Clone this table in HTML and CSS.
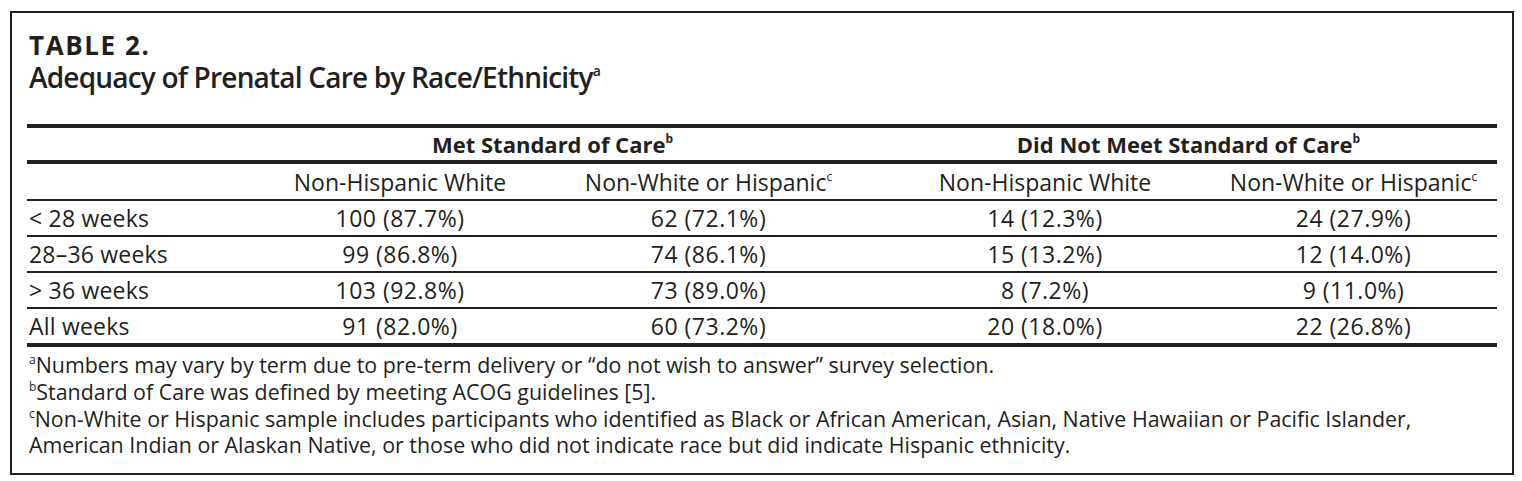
FILE: index.html
```html
<!DOCTYPE html>
<html lang="en">
<head>
<meta charset="utf-8">
<title>Table 2</title>
<link rel="stylesheet" href="styles.css">
</head>
<body>
<div class="card">
  <div class="label">TABLE 2.</div>
  <div class="title">Adequacy of Prenatal Care by Race/Ethnicity<sup>a</sup></div>
  <table class="data">
    <colgroup>
      <col class="c1"><col class="c2"><col class="c3"><col class="c4"><col class="c5">
    </colgroup>
    <thead>
      <tr class="group">
        <th></th>
        <th colspan="2">Met Standard of Care<sup>b</sup></th>
        <th colspan="2">Did Not Meet Standard of Care<sup>b</sup></th>
      </tr>
      <tr class="sub">
        <th></th>
        <th>Non-Hispanic White</th>
        <th class="shift">Non-White or Hispanic<sup>c</sup></th>
        <th>Non-Hispanic White</th>
        <th>Non-White or Hispanic<sup>c</sup></th>
      </tr>
    </thead>
    <tbody>
      <tr><td>&lt; 28 weeks</td><td>100 (87.7%)</td><td class="shift">62 (72.1%)</td><td>14 (12.3%)</td><td>24 (27.9%)</td></tr>
      <tr><td>28–36 weeks</td><td>99 (86.8%)</td><td class="shift">74 (86.1%)</td><td>15 (13.2%)</td><td>12 (14.0%)</td></tr>
      <tr><td>&gt; 36 weeks</td><td>103 (92.8%)</td><td class="shift">73 (89.0%)</td><td>8 (7.2%)</td><td>9 (11.0%)</td></tr>
      <tr><td>All weeks</td><td>91 (82.0%)</td><td class="shift">60 (73.2%)</td><td>20 (18.0%)</td><td>22 (26.8%)</td></tr>
    </tbody>
  </table>
  <div class="notes">
    <p><sup>a</sup>Numbers may vary by term due to pre-term delivery or “do not wish to answer” survey selection.</p>
    <p><sup>b</sup>Standard of Care was defined by meeting ACOG guidelines [5].</p>
    <p><sup>c</sup>Non-White or Hispanic sample includes participants who identified as Black or African American, Asian, Native Hawaiian or Pacific Islander, American Indian or Alaskan Native, or those who did not indicate race but did indicate Hispanic ethnicity.</p>
  </div>
</div>
</body>
</html>
```
FILE: styles.css
```css
html, body {
  margin: 0;
  padding: 0;
  background: #ffffff;
}
body {
  font-family: "Open Sans", "Noto Sans", sans-serif;
  color: #231f20;
}
.card {
  margin: 11px 0 0 10px;
  width: 1504px;
  height: 464px;
  box-sizing: border-box;
  border: 2px solid #231f20;
  padding: 17px 15px 0 15px;
}
.label {
  font-size: 26px;
  line-height: 30px;
  font-weight: 700;
  margin-left: 2px;
  letter-spacing: 1.6px;
}
.title {
  font-size: 28px;
  line-height: 34px;
  font-weight: 600;
  margin-left: 2px;
  letter-spacing: -0.8px;
}
.title sup {
  font-size: 14px;
  vertical-align: 12px;
  line-height: 0;
}
.data {
  margin-top: 30px;
  width: 1470px;
  border-collapse: collapse;
  table-layout: fixed;
  border-top: 4px solid #231f20;
  font-size: 23px;
}
.c1 { width: 198px; }
.c2 { width: 350px; }
.c3 { width: 305px; }
.c4 { width: 330px; }
.c5 { width: 287px; }
.data th, .data td {
  padding: 0;
  text-align: center;
  font-weight: 400;
  white-space: nowrap;
}
.data .shift {
  padding-right: 38px;
}
.data sup {
  font-size: 12px;
  vertical-align: 10px;
  line-height: 0;
  letter-spacing: 0;
}
.group th {
  height: 32px;
  font-size: 22px;
  font-weight: 700;
  border-bottom: 4px solid #231f20;
}
.sub th {
  height: 35px;
  border-bottom: 2px solid #231f20;
}
.data tbody td {
  height: 34px;
  border-bottom: 2px solid #231f20;
  letter-spacing: 0.5px;
}
.data tbody tr:last-child td {
  border-bottom: 4px solid #231f20;
}
.data tbody td:first-child {
  text-align: left;
  padding-left: 2px;
  letter-spacing: 0.2px;
}
.notes {
  margin-top: 5px;
  font-size: 21.4px;
  line-height: 26.8px;
  padding-left: 2px;
}
.notes p {
  margin: 0;
}
.notes sup {
  font-size: 12px;
  vertical-align: 9px;
  line-height: 0;
}
```
